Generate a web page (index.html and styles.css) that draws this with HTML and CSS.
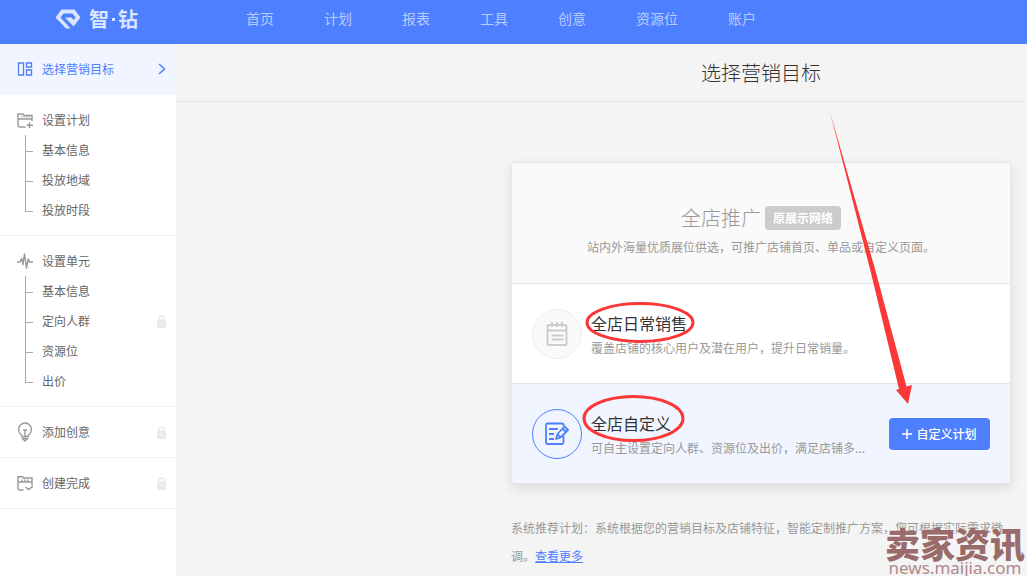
FILE: index.html
```html
<!DOCTYPE html>
<html lang="zh-CN">
<head>
<meta charset="utf-8">
<meta name="viewport" content="width=device-width, initial-scale=1">
<title>智·钻</title>
<link rel="stylesheet" href="styles.css">
</head>
<body>
<svg class="defs" aria-hidden="true">
  <symbol id="lock" viewBox="0 0 9 13">
    <path d="M2 6V3.500a2.500 2.500 0 0 1 5 0V6" fill="none" stroke="currentColor" stroke-width="1.500"/>
    <rect y="4.500" width="9" height="8.500" rx="1.500" fill="currentColor"/>
    <path d="M4.500 7.500v2" stroke="#fff"/>
  </symbol>
</svg>
<header class="topbar">
  <a class="logo" href="#">
    <svg width="26" height="20" viewBox="0 0 26 20" aria-hidden="true">
      <path d="M15.500 19.500H11L0.500 8.500 6.500 0.500H19.500L25.500 8.500 18.500 17.500 10 8.500H16.500L18.500 11 20.500 8.500 17.500 4.500H8.500L5.500 8.500Z" fill="currentColor"/>
    </svg>
    <span class="brand"><b>智</b><i></i><b>钻</b></span>
  </a>
  <nav class="nav">
    <a href="#">首页</a><a href="#">计划</a><a href="#">报表</a><a href="#">工具</a><a href="#">创意</a><a href="#">资源位</a><a href="#">账户</a>
  </nav>
</header>
<div class="layout">
  <aside class="sidebar">
    <section class="step active">
      <a class="step-title" href="#">
        <svg class="step-icon" viewBox="0 0 16 16" fill="none" stroke="currentColor" stroke-width="1.300"><path d="M1.500 2h5v12h-5zM9.500 2h5v4h-5zM9.500 9h5v5h-5z"/></svg>
        <span>选择营销目标</span>
        <svg class="chevron" width="8" height="12" viewBox="0 0 8 12" fill="none" stroke="currentColor" stroke-width="1.500"><path d="M1 1l5.500 5L1 11"/></svg>
      </a>
    </section>
    <section class="step">
      <a class="step-title" href="#">
        <svg class="step-icon" viewBox="0 0 16 16" fill="none" stroke="currentColor" stroke-width="1.400"><path d="M8.500 15H3q-2 0-2-2V2h5l1 1.500h8V9M1 7h14M12.500 10.500v5.500M9.500 13.200h6.500"/><path d="M4 4.800h9" stroke-dasharray="1.500 1" stroke-width="1"/></svg>
        <span>设置计划</span>
      </a>
      <ul class="tree">
        <li><a href="#">基本信息</a></li>
        <li><a href="#">投放地域</a></li>
        <li><a href="#">投放时段</a></li>
      </ul>
    </section>
    <section class="step">
      <a class="step-title" href="#">
        <svg class="step-icon" viewBox="0 0 16 16" fill="none" stroke="currentColor" stroke-width="1.400" stroke-linejoin="round"><path d="M0 9h3l1.700-3.500 1.300 6L7.500 1l2 14 1.700-9L12.500 9H16"/></svg>
        <span>设置单元</span>
      </a>
      <ul class="tree">
        <li><a href="#">基本信息</a></li>
        <li><a href="#">定向人群</a><svg class="lock"><use href="#lock"/></svg></li>
        <li><a href="#">资源位</a></li>
        <li><a href="#">出价</a></li>
      </ul>
    </section>
    <section class="step">
      <a class="step-title" href="#">
        <svg class="step-icon bulb" viewBox="0 0 16 20" fill="none" stroke="currentColor" stroke-width="1.400"><path d="M5 14.500Q4.800 13 3.500 12A6.400 6.400 0 1 1 12.500 12Q11.200 13 11 14.500ZM5.500 16.500 8 19l2.500-2.500ZM8 14V8M6 8h4"/></svg>
        <span>添加创意</span>
        <svg class="lock"><use href="#lock"/></svg>
      </a>
    </section>
    <section class="step">
      <a class="step-title" href="#">
        <svg class="step-icon" viewBox="0 0 16 16" fill="none" stroke="currentColor" stroke-width="1.400"><path d="M6.500 15H3q-2 0-2-2V1.700h4.500L6.500 3H15v7.500M1 7h14M8.500 12l3 2.500L16 11M5 4.500V7M8 4.500V7M11 4.500V7"/></svg>
        <span>创建完成</span>
        <svg class="lock"><use href="#lock"/></svg>
      </a>
    </section>
  </aside>
  <main class="main">
    <div class="page-head"><h1>选择营销目标</h1></div>
    <div class="content">
      <section class="card">
        <header class="card-head">
          <h2>全店推广 <span class="badge">原展示网络</span></h2>
          <p>站内外海量优质展位供选，可推广店铺首页、单品或自定义页面。</p>
        </header>
        <div class="row">
          <span class="round">
            <svg width="22" height="26" viewBox="0 0 22 26" fill="none" stroke="currentColor" stroke-width="2"><rect x="1.500" y="4" width="19" height="20" rx="1.500"/><path d="M1.500 9.500h19M6 1v5M11 1v5M16 1v5M5.500 14.500h12M5.500 18.500h12"/></svg>
          </span>
          <div class="info">
            <h3>全店日常销售</h3>
            <p>覆盖店铺的核心用户及潜在用户，提升日常销量。</p>
          </div>
        </div>
        <div class="row selected">
          <span class="round">
            <svg width="24" height="24" viewBox="0 0 24 24" fill="none" stroke="currentColor" stroke-width="1.800" stroke-linejoin="round"><path d="M18.500 4V3q0-1.500-1.500-1.500H2.500Q1 1.500 1 3v17.500Q1 22 2.500 22H17q1.500 0 1.500-1.500V14M4 7h9M4 12h5M4 17h5M11 17l1.500-5L19.500 4.500 23 8 15.500 15.500ZM12.500 12l3 3.500M17.500 6.500 21 10"/></svg>
          </span>
          <div class="info">
            <h3>全店自定义</h3>
            <p>可自主设置定向人群、资源位及出价，满足店铺多...</p>
          </div>
          <button class="create" type="button">
            <svg width="10" height="10" viewBox="0 0 10 10" stroke="currentColor" stroke-width="1.500"><path d="M5 0v10M0 5h10"/></svg>
            <span>自定义计划</span>
          </button>
        </div>
        <svg class="marks" viewBox="0 0 500 322" aria-hidden="true">
          <g fill="none" stroke="#fb3838" stroke-width="3">
            <ellipse cx="128" cy="159.500" rx="53" ry="19"/>
            <ellipse cx="121.500" cy="255.500" rx="49.500" ry="22"/>
          </g>
          <path d="M318-51 363 106 394.500 223.500 400 222 396 241 384 227 387 226 358.500 108Z" fill="#fb3838"/>
        </svg>
      </section>
      <p class="note">系统推荐计划：系统根据您的营销目标及店铺特征，智能定制推广方案，您可根据实际需求微调。<a href="#">查看更多</a></p>
    </div>
  </main>
</div>
<div class="watermark"><strong>卖家资讯</strong><span>news.maijia.com</span></div>
</body>
</html>
```

FILE: styles.css
```css
* { box-sizing: border-box; }
body, h1, h2, h3, p, ul { margin: 0; padding: 0; }
body {
  min-height: 100vh;
  display: flex;
  flex-direction: column;
  overflow: hidden;
  background: #f4f4f4;
  color: #999;
  font: 12px/20px "Noto Sans CJK SC", sans-serif;
}
h1, h2, h3 { font-weight: 300; }
a { color: inherit; text-decoration: none; }
ul { list-style: none; }
svg { flex: none; }
.defs { position: absolute; width: 0; height: 0; }

.topbar {
  display: flex;
  height: 44px;
  padding-left: 55px;
  background: #4d7fff;
}
.logo {
  display: flex;
  align-items: center;
  gap: 8px;
  width: 191px;
  height: 38px;
  color: #dbe5ff;
}
.brand {
  display: flex;
  align-items: center;
  gap: 3px;
  font-size: 20px;
}
.brand i {
  width: 3px;
  height: 3px;
  background: currentColor;
}
.nav {
  display: flex;
  align-items: center;
  gap: 50px;
  height: 36px;
  color: #b8ccff;
  font-size: 14px;
}

.layout { display: flex; flex: 1; }
.sidebar {
  flex: none;
  width: 176px;
  background: #fff;
  color: #666;
}
.step {
  padding: 10px 0;
  border-bottom: 1px solid #f2f2f2;
}
.step.active {
  background: #f0f5ff;
  border-color: #f0f5ff;
  color: #4d7fff;
}
.step-title {
  display: flex;
  align-items: center;
  gap: 9px;
  height: 30px;
  padding: 0 10px 0 17px;
}
.step-icon {
  width: 16px;
  height: 16px;
  color: #999;
}
.step-icon.bulb { height: 20px; }
.active .step-icon { color: #4d7fff; }
.chevron { margin-left: auto; }
.lock {
  width: 9px;
  height: 13px;
  margin-left: auto;
  color: #eaeaea;
}
.tree li {
  position: relative;
  display: flex;
  align-items: center;
  height: 30px;
  padding: 0 10px 0 42px;
}
.tree li::before,
.tree li:not(:last-child)::after {
  content: "";
  position: absolute;
  left: 25px;
  border-left: 1px solid #aaa;
}
.tree li::before {
  top: 0;
  width: 7px;
  height: 16px;
  border-bottom: 1px solid #aaa;
}
.tree li:not(:last-child)::after {
  top: 16px;
  bottom: 0;
}

.main { flex: 1; min-width: 0; }
.page-head {
  display: flex;
  justify-content: flex-end;
  padding: 14px 16px;
  border-bottom: 1px solid #e5e5e5;
}
.page-head h1 {
  width: 500px;
  color: #333;
  font-size: 20px;
  line-height: 29px;
  text-align: center;
}
.content {
  width: 532px;
  margin-left: auto;
  padding: 60px 16px 0;
}
.card {
  position: relative;
  border: 1px solid #e5e5e5;
  border-radius: 4px;
  background: #fff;
  box-shadow: 0 4px 12px rgba(0, 0, 0, 0.1);
}
.card-head {
  padding: 40px 20px 26px;
  border-bottom: 1px solid #e5e5e5;
  border-radius: 4px 4px 0 0;
  background: #fafafa;
  text-align: center;
}
.card-head h2 {
  display: flex;
  justify-content: center;
  align-items: center;
  gap: 4px;
  font-size: 20px;
  line-height: 30px;
  padding-bottom: 4px;
}
.badge {
  padding: 0 8px;
  border-radius: 4px;
  background: #ccc;
  color: #fff;
  font-size: 12px;
  font-weight: 700;
  line-height: 24px;
}
.row {
  display: flex;
  align-items: center;
  padding: 25px 20px 24px;
  border-bottom: 1px solid #e5e5e5;
}
.row.selected {
  border-bottom: 0;
  border-radius: 0 0 4px 4px;
  background: #f0f5ff;
}
.round {
  flex: none;
  display: grid;
  place-items: center;
  width: 50px;
  height: 50px;
  border: 1px solid #eee;
  border-radius: 50%;
  background: #fafafa;
  color: #ccc;
}
.selected .round {
  border-color: #4d7fff;
  background: none;
  color: #4d7fff;
}
.info { flex: 1; padding-left: 9px; white-space: nowrap; }
.info h3 {
  color: #333;
  font-size: 16px;
  font-weight: 400;
  line-height: 28px;
}
.info p { line-height: 22px; }
.create {
  display: flex;
  align-items: center;
  justify-content: center;
  gap: 4px;
  width: 101px;
  height: 32px;
  padding: 0;
  border: 0;
  border-radius: 4px;
  background: #4d7fff;
  color: #fff;
  font: 500 12px/20px "Noto Sans CJK SC", sans-serif;
}
.marks {
  position: absolute;
  top: 0;
  left: 0;
  width: 500px;
  height: 322px;
  overflow: visible;
  pointer-events: none;
}
.note { padding-top: 30px; line-height: 28px; }
.note a { color: #4d7fff; text-decoration: underline; }

.watermark {
  position: absolute;
  right: 2px;
  bottom: 0;
  display: flex;
  flex-direction: column;
  align-items: center;
  color: #996b6b;
}
.watermark strong {
  font-size: 35px;
  font-weight: 900;
  line-height: 32px;
}
.watermark span {
  color: #b08989;
  font: 17px/17px "Noto Sans", sans-serif;
}
```
